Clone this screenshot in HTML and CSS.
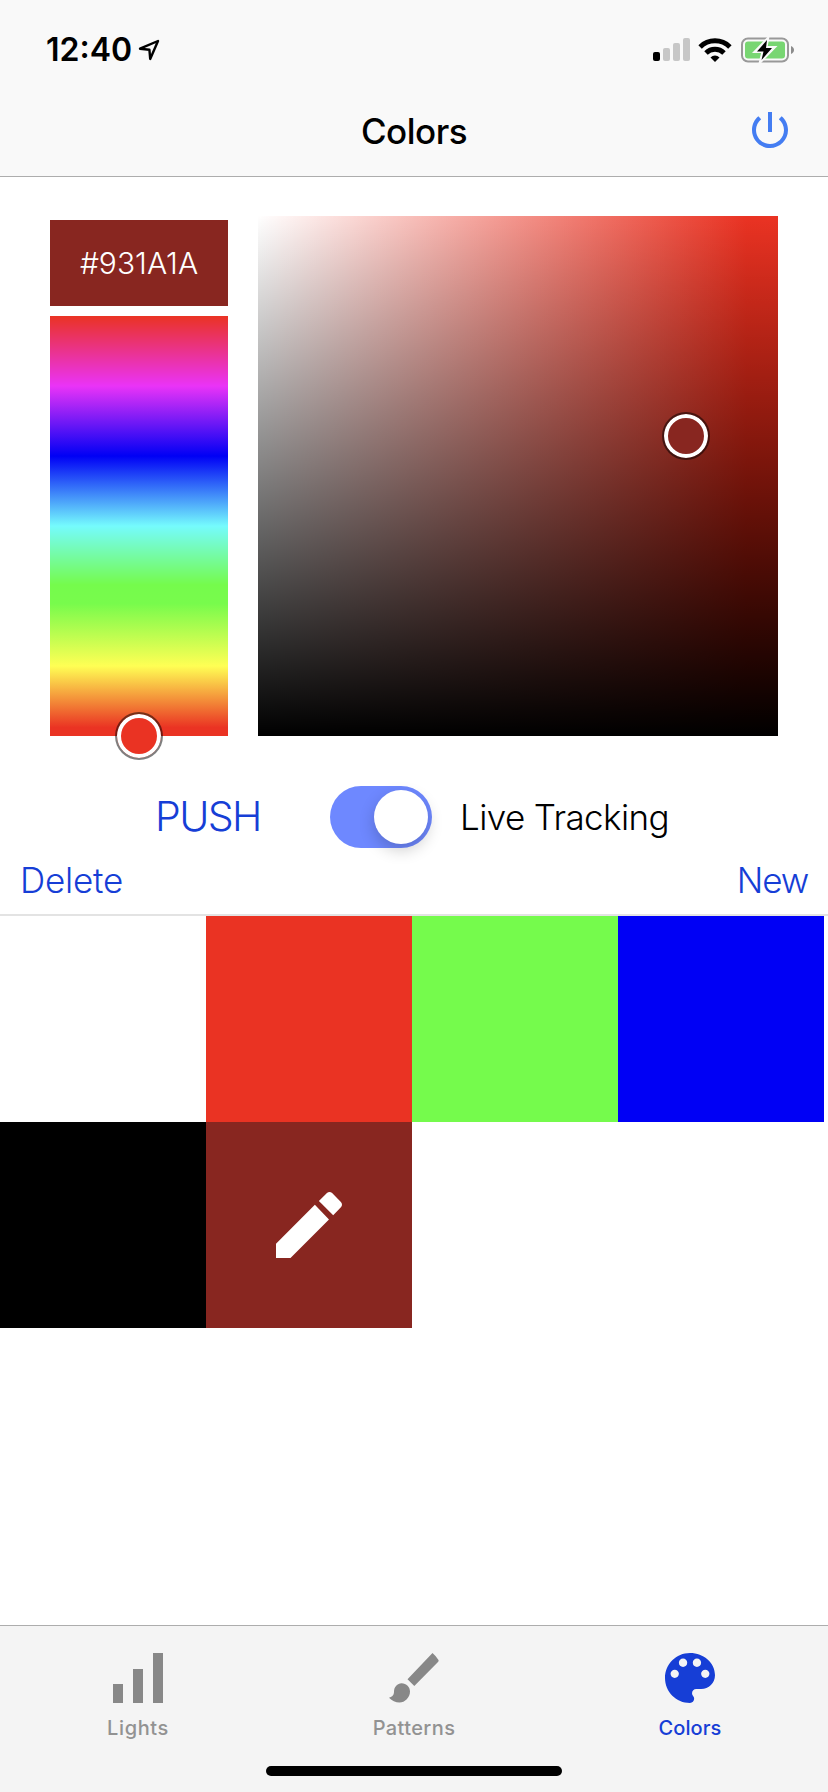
FILE: index.html
```html
<!DOCTYPE html>
<html lang="en">
<head>
<meta charset="utf-8">
<title>Colors</title>
<link rel="stylesheet" href="styles.css">
</head>
<body>
<div class="app">
  <header class="header">
    <div class="status">
      <div class="status-left">
        <span class="clock">12:40</span>
        <svg class="location" viewBox="0 0 22 22" width="22" height="22"><path d="M2 9.7 20 2 12.2 20 11.4 10.7Z" fill="none" stroke="#000" stroke-width="2.4" stroke-linejoin="round"/></svg>
      </div>
      <div class="status-right">
        <svg width="37" height="23" viewBox="0 0 37 23"><rect y="14" width="7" height="9" rx="2"/><g fill="#c7c7c7"><rect x="10" y="10" width="7" height="13" rx="2"/><rect x="20" y="5" width="7" height="18" rx="2"/><rect x="30" width="7" height="23" rx="2"/></g></svg>
        <svg class="wifi" width="34" height="24" viewBox="0 0 34 24"><g fill="none" stroke="#000" stroke-width="4.9"><path d="M2.1 8.9A21.3 21.3 0 0 1 31.9 8.9"/><path d="M8 15A12.8 12.8 0 0 1 26 15"/></g><path d="M12.5 19.4A6.4 6.4 0 0 1 21.5 19.4L17 24Z"/></svg>
        <svg class="battery" width="54" height="26" viewBox="0 0 54 26"><rect x="1" y="1.5" width="46" height="23" rx="6" fill="none" stroke="#999" stroke-width="2"/><rect x="4" y="4.500" width="40" height="17" rx="3" fill="#78d672"/><path d="M50 9c4 1.500 4 6.500 0 8Z" fill="#8c8c8c"/><path d="M26.500 2 14.500 14.500H22L19.500 24.500 33 10.500H25Z" stroke="#f9f9f9" stroke-width="3"/><path d="M26 3 16 14.500H22.500L20.500 23 31 11H25Z"/></svg>
      </div>
    </div>
    <div class="nav">
      <h1 class="title">Colors</h1>
      <svg class="power" width="36" height="36" viewBox="3 3 18 18" fill="#447df2"><path d="M13 3h-2v10h2V3zm4.830 2.170-1.420 1.420C17.990 7.860 19 9.810 19 12c0 3.870-3.130 7-7 7s-7-3.130-7-7c0-2.190 1.010-4.140 2.580-5.420L6.170 5.170C4.230 6.820 3 9.260 3 12c0 4.970 4.030 9 9 9s9-4.030 9-9c0-2.740-1.230-5.180-3.170-6.830z"/></svg>
    </div>
  </header>

  <main class="main">
    <section class="picker">
      <div class="picker-side">
        <div class="hex">#931A1A</div>
        <div class="hue"><span class="thumb thumb-hue"></span></div>
      </div>
      <div class="shade"><span class="thumb thumb-shade"></span></div>
    </section>
    <section class="controls">
      <span class="push">PUSH</span>
      <span class="toggle"><span class="knob"></span></span>
      <span class="tracking">Live Tracking</span>
    </section>
    <section class="actions">
      <span class="delete">Delete</span>
      <span class="new">New</span>
    </section>
    <section class="grid">
      <div class="cell white"></div>
      <div class="cell red"></div>
      <div class="cell green"></div>
      <div class="cell blue"></div>
      <div class="cell black"></div>
      <div class="cell maroon"><svg width="66" height="66" viewBox="3 3 18 18" fill="#fff"><path d="M3 17.100V21h3.950L17.450 10.500 13.600 6.500zM20.700 7.150c.4-.4.4-1 0-1.400l-2.400-2.450c-.4-.4-1-.4-1.400 0L14.700 5.450l3.900 3.900z"/></svg></div>
    </section>
  </main>

  <nav class="tabs">
    <div class="tab-row">
      <div class="tab">
        <svg width="50" height="50" viewBox="0 0 50 50" fill="#888"><path d="M0 31h10v19H0zM20 16h10v34H20zM40 0h10v50H40z"/></svg>
        <span class="label lights">Lights</span>
      </div>
      <div class="tab">
        <svg width="50" height="50" viewBox="0 0 50 50" fill="#888"><path d="M43.500 0Q47 3 49.500 7 50 8 49 9L25.300 33 18.500 26.200ZM12.500 30.200C17.500 30.200 21 34 21 38.500 21 44.500 16 49.500 10.500 49.500 6.500 49.500 3 47.500 0 44.700 3.500 43.500 5 42 5 38.500 5 34 8.500 30.200 12.500 30.200Z"/></svg>
        <span class="label patterns">Patterns</span>
      </div>
      <div class="tab active">
        <svg width="50" height="50" viewBox="3 3 18 18" fill="#163ed6"><path d="M12 3c-4.970 0-9 4.030-9 9s4.030 9 9 9c.83 0 1.500-.67 1.500-1.500 0-.39-.15-.74-.39-1.010-.23-.26-.38-.61-.38-.99 0-.83.67-1.500 1.500-1.500H16c2.760 0 5-2.240 5-5 0-4.420-4.030-8-9-8zm-5.500 9c-.83 0-1.500-.67-1.500-1.500S5.670 9 6.500 9 8 9.670 8 10.500 7.330 12 6.500 12zm3-4C8.670 8 8 7.330 8 6.500S8.670 5 9.500 5s1.500.67 1.500 1.500S10.330 8 9.500 8zm5 0c-.83 0-1.500-.67-1.500-1.500S13.670 5 14.500 5s1.500.67 1.500 1.500S15.330 8 14.500 8zm3 4c-.83 0-1.500-.67-1.500-1.500S16.670 9 17.500 9s1.500.67 1.500 1.500-.67 1.500-1.500 1.500z"/></svg>
        <span class="label colors">Colors</span>
      </div>
    </div>
    <div class="home"></div>
  </nav>
</div>
</body>
</html>
```

FILE: styles.css
```css
* { box-sizing: border-box; }
body { margin: 0; background: #fff; font-family: Inter, "Liberation Sans", sans-serif; color: #000; }
svg { display: block; flex: none; }
span { white-space: nowrap; }
.app { width: 828px; height: 1792px; display: flex; flex-direction: column; overflow: hidden; }

.header { height: 177px; background: #f9f9f9; border-bottom: 1px solid #adadad; flex: none; }
.status { height: 88px; padding: 11px 33px 0 46px; display: flex; justify-content: space-between; align-items: center; }
.status-left, .status-right { display: flex; align-items: center; }
.clock { width: 92px; font-size: 32px; font-weight: 600; line-height: 40px; }
.wifi { margin: 0 9px 0 8px; }
.nav { height: 88px; padding: 0 40px; display: grid; grid-template-columns: 36px 1fr 36px; align-items: center; }
.title { grid-column: 2; margin: 0 0 2px; font-size: 35px; font-weight: 500; line-height: 44px; text-align: center; letter-spacing: -.5px; }
.power { margin-bottom: 4px; }

.main { flex: 1; display: flex; flex-direction: column; }
.picker { display: flex; gap: 30px; padding: 39px 50px 0; height: 559px; }
.picker-side { width: 178px; padding-top: 4px; display: flex; flex-direction: column; gap: 10px; }
.hex { height: 86px; background: #882620; color: #fff; font-size: 30px; font-weight: 300; line-height: 86px; text-align: center; }
.hue { position: relative; height: 420px; background: linear-gradient(#ea3323, #ea33f7 16.67%, #0000f5 33.33%, #75fbfd 50%, #75fb4c 64%, #78fb4c 68.5%, #ffff54 83.33%, #ea3323 98%); }
.shade { position: relative; width: 520px; height: 520px; background: linear-gradient(to top, #000, transparent), linear-gradient(to right, #fff, transparent 94%), linear-gradient(#ea3323, #ea1c06); }
.thumb { position: absolute; width: 48px; height: 48px; margin: -24px; border-radius: 50%; border: 2px solid rgba(0, 0, 0, .5); background-clip: padding-box; box-shadow: inset 0 0 0 4px #fff; }
.thumb-hue { left: 50%; top: 100%; background-color: #ea3323; }
.thumb-shade { left: 428px; top: 220px; background-color: #882620; }

.controls { height: 112px; padding: 50px 0 0 155px; display: flex; align-items: flex-start; line-height: 62px; }
.push { width: 175px; font-size: 41px; font-weight: 300; line-height: 60px; letter-spacing: -1.6px; color: #163ed6; }
.toggle { width: 102px; height: 62px; padding: 4px; border-radius: 31px; background: #6e88ff; display: flex; justify-content: flex-end; }
.knob { width: 54px; height: 54px; border-radius: 50%; background: #fff; box-shadow: 0 6px 16px rgba(0, 0, 0, .2); }
.tracking { margin-left: 28px; font-size: 35px; font-weight: 300; letter-spacing: -.6px; }
.actions { height: 68px; padding: 0 20px 2px; display: flex; justify-content: space-between; border-bottom: 2px solid #e3e3e3; font-size: 35px; font-weight: 300; line-height: 64px; color: #163ed6; }
.delete { letter-spacing: -.2px; }
.new { letter-spacing: -1.2px; }

.grid { display: grid; grid-template-columns: repeat(4, 206px); grid-auto-rows: 206px; }
.cell { display: grid; place-items: center; }
.white { background: #fff; }
.red { background: #ea3323; }
.green { background: #75fb4c; }
.blue { background: #0000f5; }
.black { background: #000; }
.maroon { background: #882620; }

.tabs { height: 167px; flex: none; background: #f4f4f4; border-top: 1px solid #adadad; display: flex; flex-direction: column; align-items: center; }
.tab-row { width: 828px; height: 140px; display: grid; grid-template-columns: 276px 276px 276px; }
.tab { display: flex; flex-direction: column; align-items: center; padding-top: 27px; color: #929292; }
.active { color: #163ed6; }
.label { margin-top: 13px; font-size: 20px; font-weight: 500; line-height: 24px; letter-spacing: .6px; }
.patterns { letter-spacing: .4px; }
.colors { letter-spacing: .1px; }
.home { width: 296px; height: 10px; border-radius: 5px; background: #000; }
```
